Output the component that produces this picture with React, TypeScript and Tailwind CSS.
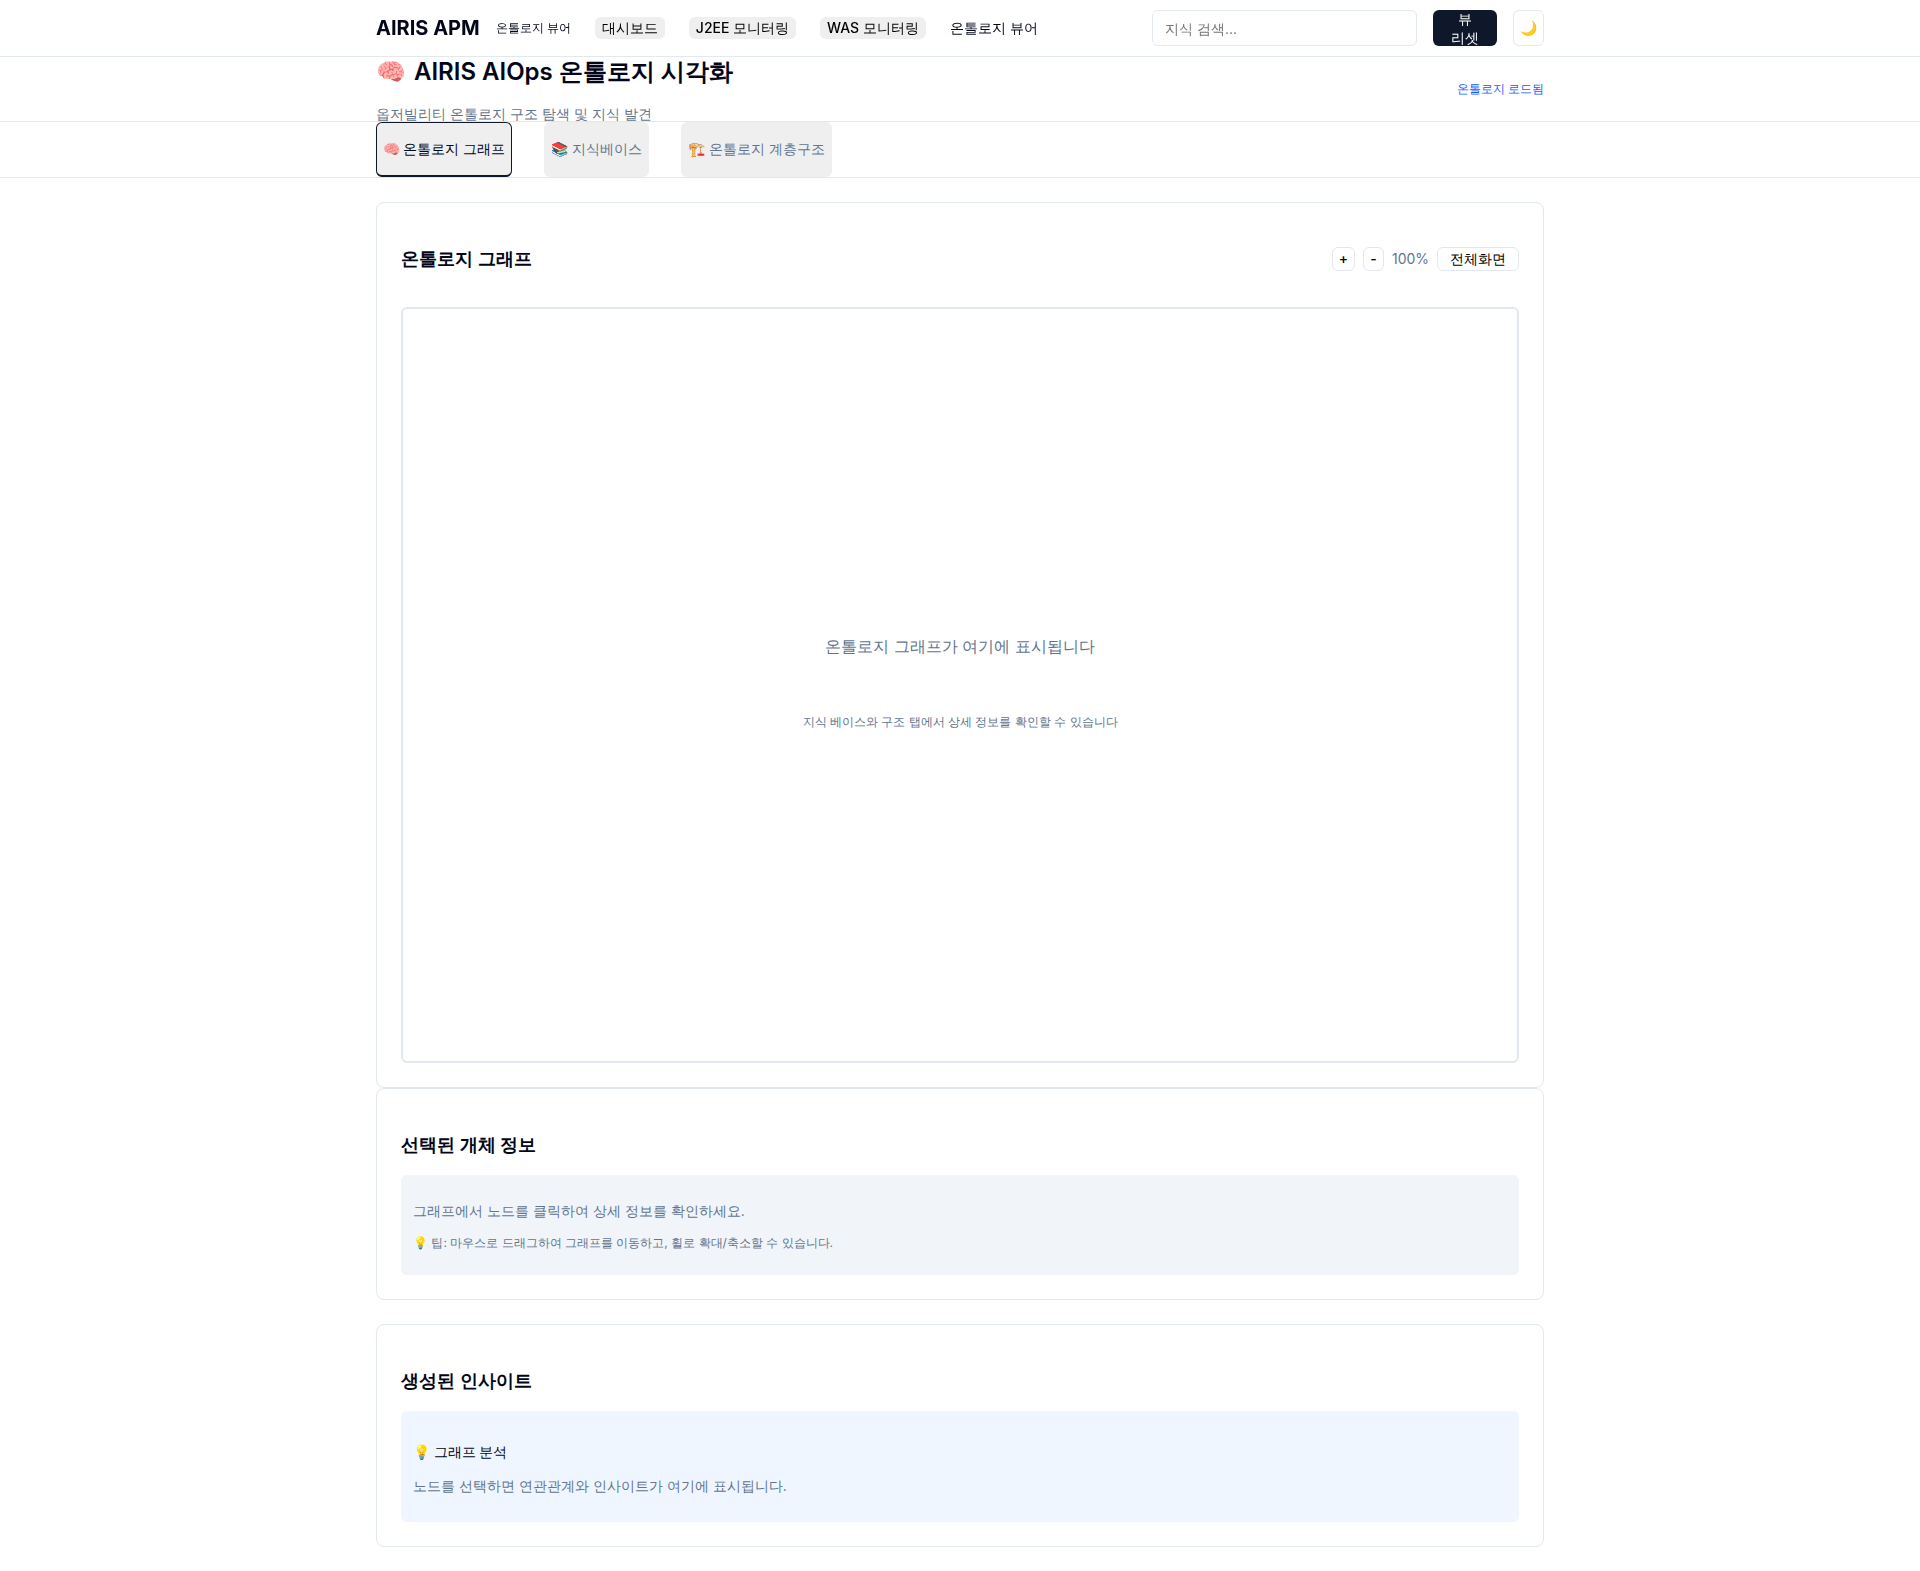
const navButton =
  'h-[22px] shrink-0 whitespace-nowrap rounded-md bg-[#efefef] text-sm leading-[20px] font-medium text-black';
const tabButton =
  'h-[55px] shrink-0 whitespace-nowrap rounded-md bg-[#efefef] text-sm font-medium';
const outlineButton =
  'h-6 shrink-0 whitespace-nowrap rounded-md border border-slate-200 bg-white text-center text-sm leading-[22px] font-medium text-black';

function TopBar() {
  return (
    <header className="sticky top-0 z-10 h-[57px] border-b border-slate-200 bg-white/95 backdrop-blur">
      <div className="mx-auto flex h-14 w-[1168px] items-center">
        <span className="w-[104px] text-xl font-bold whitespace-nowrap">AIRIS APM</span>
        <span className="ml-4 w-[75px] text-xs whitespace-nowrap">온톨로지 뷰어</span>
        <nav className="ml-6 flex items-center gap-6">
          <button className={`w-[70px] ${navButton}`}>대시보드</button>
          <button className={`w-[107px] ${navButton}`}>J2EE 모니터링</button>
          <button className={`w-[106px] ${navButton}`}>WAS 모니터링</button>
          <span className="text-sm font-medium whitespace-nowrap">온톨로지 뷰어</span>
        </nav>
        <div className="ml-auto flex items-center gap-4">
          <input
            className="h-9 w-[265px] rounded-md border border-slate-200 bg-white px-3 text-sm placeholder:text-[#757575]"
            placeholder="지식 검색..."
          />
          <button className="flex h-9 w-16 items-center justify-center rounded-md bg-slate-900 px-4 text-center text-sm leading-[19px] font-medium text-slate-50">
            뷰<br />리셋
          </button>
          <button className="h-9 w-[31px] rounded-md border border-slate-200 bg-white text-center text-sm">🌙</button>
        </div>
      </div>
    </header>
  );
}

function TitleBar() {
  return (
    <div className="h-[65px] border-b border-slate-200">
      <div className="mx-auto flex h-16 w-[1168px] items-center justify-between">
        <div className="whitespace-nowrap">
          <h1 className="flex gap-2 text-2xl leading-[36px] font-semibold">
            <span>🧠</span>
            <span>AIRIS AIOps 온톨로지 시각화</span>
          </h1>
          <p className="mt-[13px] text-sm leading-[21px] text-slate-500">옵저빌리티 온톨로지 구조 탐색 및 지식 발견</p>
        </div>
        <span className="text-xs text-blue-600">온톨로지 로드됨</span>
      </div>
    </div>
  );
}

function Tabs() {
  return (
    <div className="h-14 border-b border-slate-200">
      <div className="mx-auto flex w-[1168px] gap-8">
        <button className={`w-[136px] border border-b-2 border-slate-900 text-slate-950 ${tabButton}`}>🧠 온톨로지 그래프</button>
        <button className={`w-[105px] border-b-2 border-transparent text-slate-500 ${tabButton}`}>📚 지식베이스</button>
        <button className={`w-[151px] border-b-2 border-transparent text-slate-500 ${tabButton}`}>🏗️ 온톨로지 계층구조</button>
      </div>
    </div>
  );
}

export default function App() {
  return (
    <div className="min-h-[1571px] bg-white font-[Inter,sans-serif] text-slate-950">
      <TopBar />
      <TitleBar />
      <Tabs />
      <main className="mx-auto w-[1168px] pt-6">
        <section className="h-[886px] rounded-lg border border-slate-200 px-6">
          <div className="flex h-[104px] items-center justify-between pt-2">
            <h3 className="text-lg font-semibold">온톨로지 그래프</h3>
            <div className="flex items-center gap-2">
              <button className={`w-[23px] ${outlineButton}`}>+</button>
              <button className={`w-[21px] ${outlineButton}`}>-</button>
              <span className="w-[37px] text-sm text-slate-500">100%</span>
              <button className={`w-[82px] ${outlineButton}`}>전체화면</button>
            </div>
          </div>
          <div className="flex h-[756px] flex-col items-center justify-center rounded-md border-2 border-slate-200 pb-1.5 text-slate-500">
            <p className="text-base leading-6">온톨로지 그래프가 여기에 표시됩니다</p>
            <p className="mt-[55px] text-xs leading-[18px]">지식 베이스와 구조 탭에서 상세 정보를 확인할 수 있습니다</p>
          </div>
        </section>

        <section className="h-[212px] rounded-lg border border-slate-200 px-6 pt-[42px]">
          <h3 className="text-lg leading-[27px] font-semibold">선택된 개체 정보</h3>
          <div className="mt-[17px] h-[100px] rounded-md bg-slate-100 px-3 pt-[25px] text-slate-500">
            <p className="text-sm leading-[21px]">그래프에서 노드를 클릭하여 상세 정보를 확인하세요.</p>
            <p className="mt-[13px] text-xs leading-[18px]">💡 팁: 마우스로 드래그하여 그래프를 이동하고, 휠로 확대/축소할 수 있습니다.</p>
          </div>
        </section>

        <section className="mt-6 h-[223px] rounded-lg border border-slate-200 px-6 pt-[42px]">
          <h3 className="text-lg leading-[27px] font-semibold">생성된 인사이트</h3>
          <div className="mt-[17px] h-[111px] rounded-md bg-blue-50 px-3 pt-[30px]">
            <h4 className="text-sm leading-[21px] font-medium">💡 그래프 분석</h4>
            <p className="mt-[13px] text-sm leading-[21px] text-slate-500">노드를 선택하면 연관관계와 인사이트가 여기에 표시됩니다.</p>
          </div>
        </section>
      </main>
    </div>
  );
}
